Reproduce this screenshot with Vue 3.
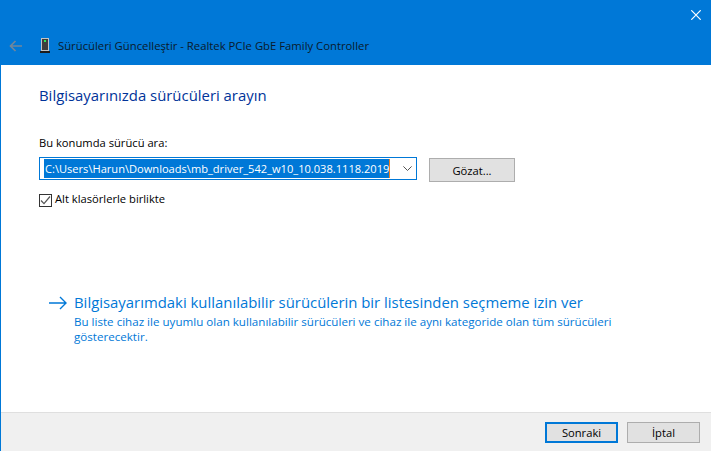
<template>
  <div class="window">
    <header class="titlebar">
      <div class="close-row">
        <svg class="close" width="10" height="10" viewBox="0 0 10 10"><path d="M.3.3l9.4 9.4M9.7.3L.3 9.7" stroke="#fff" stroke-width="1.2" fill="none"/></svg>
      </div>
      <div class="nav-row">
        <svg class="back" width="13" height="12" viewBox="0 0 13 12"><path d="M13 6H1.5M6.5 1L1.5 6l5 5" stroke="#71869b" stroke-width="1.7" fill="none"/></svg>
        <svg class="device" width="10" height="15" viewBox="0 0 10 15">
          <rect x="1.5" y="0.5" width="7" height="12" fill="#3d3d3d" stroke="#c4c4c4"/>
          <rect x="4" y="2" width="2" height="2" fill="#2ee85a"/>
          <rect x="0" y="13" width="10" height="2" fill="#1c1c1c"/>
        </svg>
        <span class="title">Sürücüleri Güncelleştir - Realtek PCIe GbE Family Controller</span>
      </div>
    </header>
    <main class="content">
      <h1 class="heading">Bilgisayarınızda sürücüleri arayın</h1>
      <label class="path-label">Bu konumda sürücü ara:</label>
      <div class="path-row">
        <div class="combo">
          <span class="selected">C:\Users\Harun\Downloads\mb_driver_542_w10_10.038.1118.2019</span>
          <svg class="chevron" width="9" height="5" viewBox="0 0 9 5"><path d="M.4.4l4.1 4.1L8.6.4" stroke="#555" stroke-width="1" fill="none"/></svg>
        </div>
        <button class="btn browse">Gözat...</button>
      </div>
      <div class="check-row">
        <span class="checkbox">
          <svg width="11" height="11" viewBox="0 0 11 11"><path d="M1 5.5l3 3.2L10 1.5" stroke="#555" stroke-width="1.2" fill="none"/></svg>
        </span>
        <span class="check-label">Alt klasörlerle birlikte</span>
      </div>
      <div class="link-block">
        <svg class="arrow" width="18" height="14" viewBox="0 0 18 14"><path d="M0 7h17M11 1l6 6-6 6" stroke="#0078d7" stroke-width="1.4" fill="none"/></svg>
        <div class="link-text">
          <div class="link-title">Bilgisayarımdaki kullanılabilir sürücülerin bir listesinden seçmeme izin ver</div>
          <div class="link-desc">Bu liste cihaz ile uyumlu olan kullanılabilir sürücüleri ve cihaz ile aynı kategoride olan tüm sürücüleri<br>gösterecektir.</div>
        </div>
      </div>
    </main>
    <footer class="footer">
      <button class="btn primary">Sonraki</button>
      <button class="btn">İptal</button>
    </footer>
  </div>
</template>

<script setup>
</script>

<style>
html, body { margin: 0; padding: 0; background: #fff; overflow: hidden; }
</style>

<style scoped>
.window {
  width: 711px;
  height: 451px;
  box-sizing: border-box;
  border-left: 1px solid #0078d7;
  display: flex;
  flex-direction: column;
  font-family: "Open Sans", "Noto Sans", sans-serif;
  font-size: 11.2px;
  color: #000;
  background: #fff;
}
.titlebar {
  height: 65px;
  background: #0078d7;
  margin-left: -1px;
  display: flex;
  flex-direction: column;
  flex: none;
}
.close-row {
  height: 35px;
  display: flex;
  justify-content: flex-end;
  padding: 10px 10px 0 0;
  box-sizing: border-box;
}
.nav-row {
  display: flex;
  align-items: center;
  padding-left: 9px;
  height: 21px;
}
.device { margin-left: 18px; }
.title { margin-left: 8px; font-size: 11.3px; color: #0a1a2c; }
.content {
  flex: 1;
  padding: 0 0 0 38px;
  display: flex;
  flex-direction: column;
}
.heading {
  margin: 20px 0 0;
  font-size: 14.9px;
  line-height: 20px;
  font-weight: 400;
  color: #003399;
}
.path-label { margin-top: 30px; line-height: 16px; }
.path-row { display: flex; align-items: flex-start; margin-top: 6px; }
.combo {
  width: 378px;
  height: 23px;
  box-sizing: border-box;
  border: 1px solid #0078d7;
  display: flex;
  align-items: center;
  padding-left: 4px;
  background: #fff;
}
.selected {
  background: #0078d7;
  color: #fff;
  height: 19px;
  line-height: 19px;
  width: 346px;
  white-space: nowrap;
  overflow: hidden;
  border-right: 1px solid #f08020;
  padding-left: 1px;
  box-sizing: border-box;
  font-size: 11.1px;
}
.chevron { margin-left: 13px; }
.btn {
  width: 73px;
  height: 21px;
  box-sizing: border-box;
  border: 1px solid #adadad;
  background: #e1e1e1;
  font: inherit;
  color: #000;
  padding: 0;
}
.browse { width: 86px; height: 24px; margin: 1px 0 0 12px; }
.check-row { display: flex; align-items: center; margin-top: 10px; }
.checkbox {
  width: 13px;
  height: 13px;
  box-sizing: border-box;
  border: 1px solid #333;
  display: flex;
  align-items: center;
  justify-content: center;
}
.check-label { margin-left: 3px; line-height: 14px; margin-bottom: 2px; }
.link-block { display: flex; margin-top: 84px; padding-left: 10px; align-items: flex-start; }
.arrow { margin-top: 4px; flex: none; }
.link-text { margin-left: 7px; color: #0078d7; }
.link-title { font-size: 14.9px; line-height: 20px; }
.link-desc { font-size: 11.6px; line-height: 15px; margin-top: 2px; }
.footer {
  height: 39px;
  flex: none;
  box-sizing: border-box;
  background: #f0f0f0;
  border-top: 1px solid #dfdfdf;
  display: flex;
  justify-content: flex-end;
  gap: 9px;
  padding: 9px 11px 0 0;
}
.primary { border: 2px solid #0078d7; }
</style>
